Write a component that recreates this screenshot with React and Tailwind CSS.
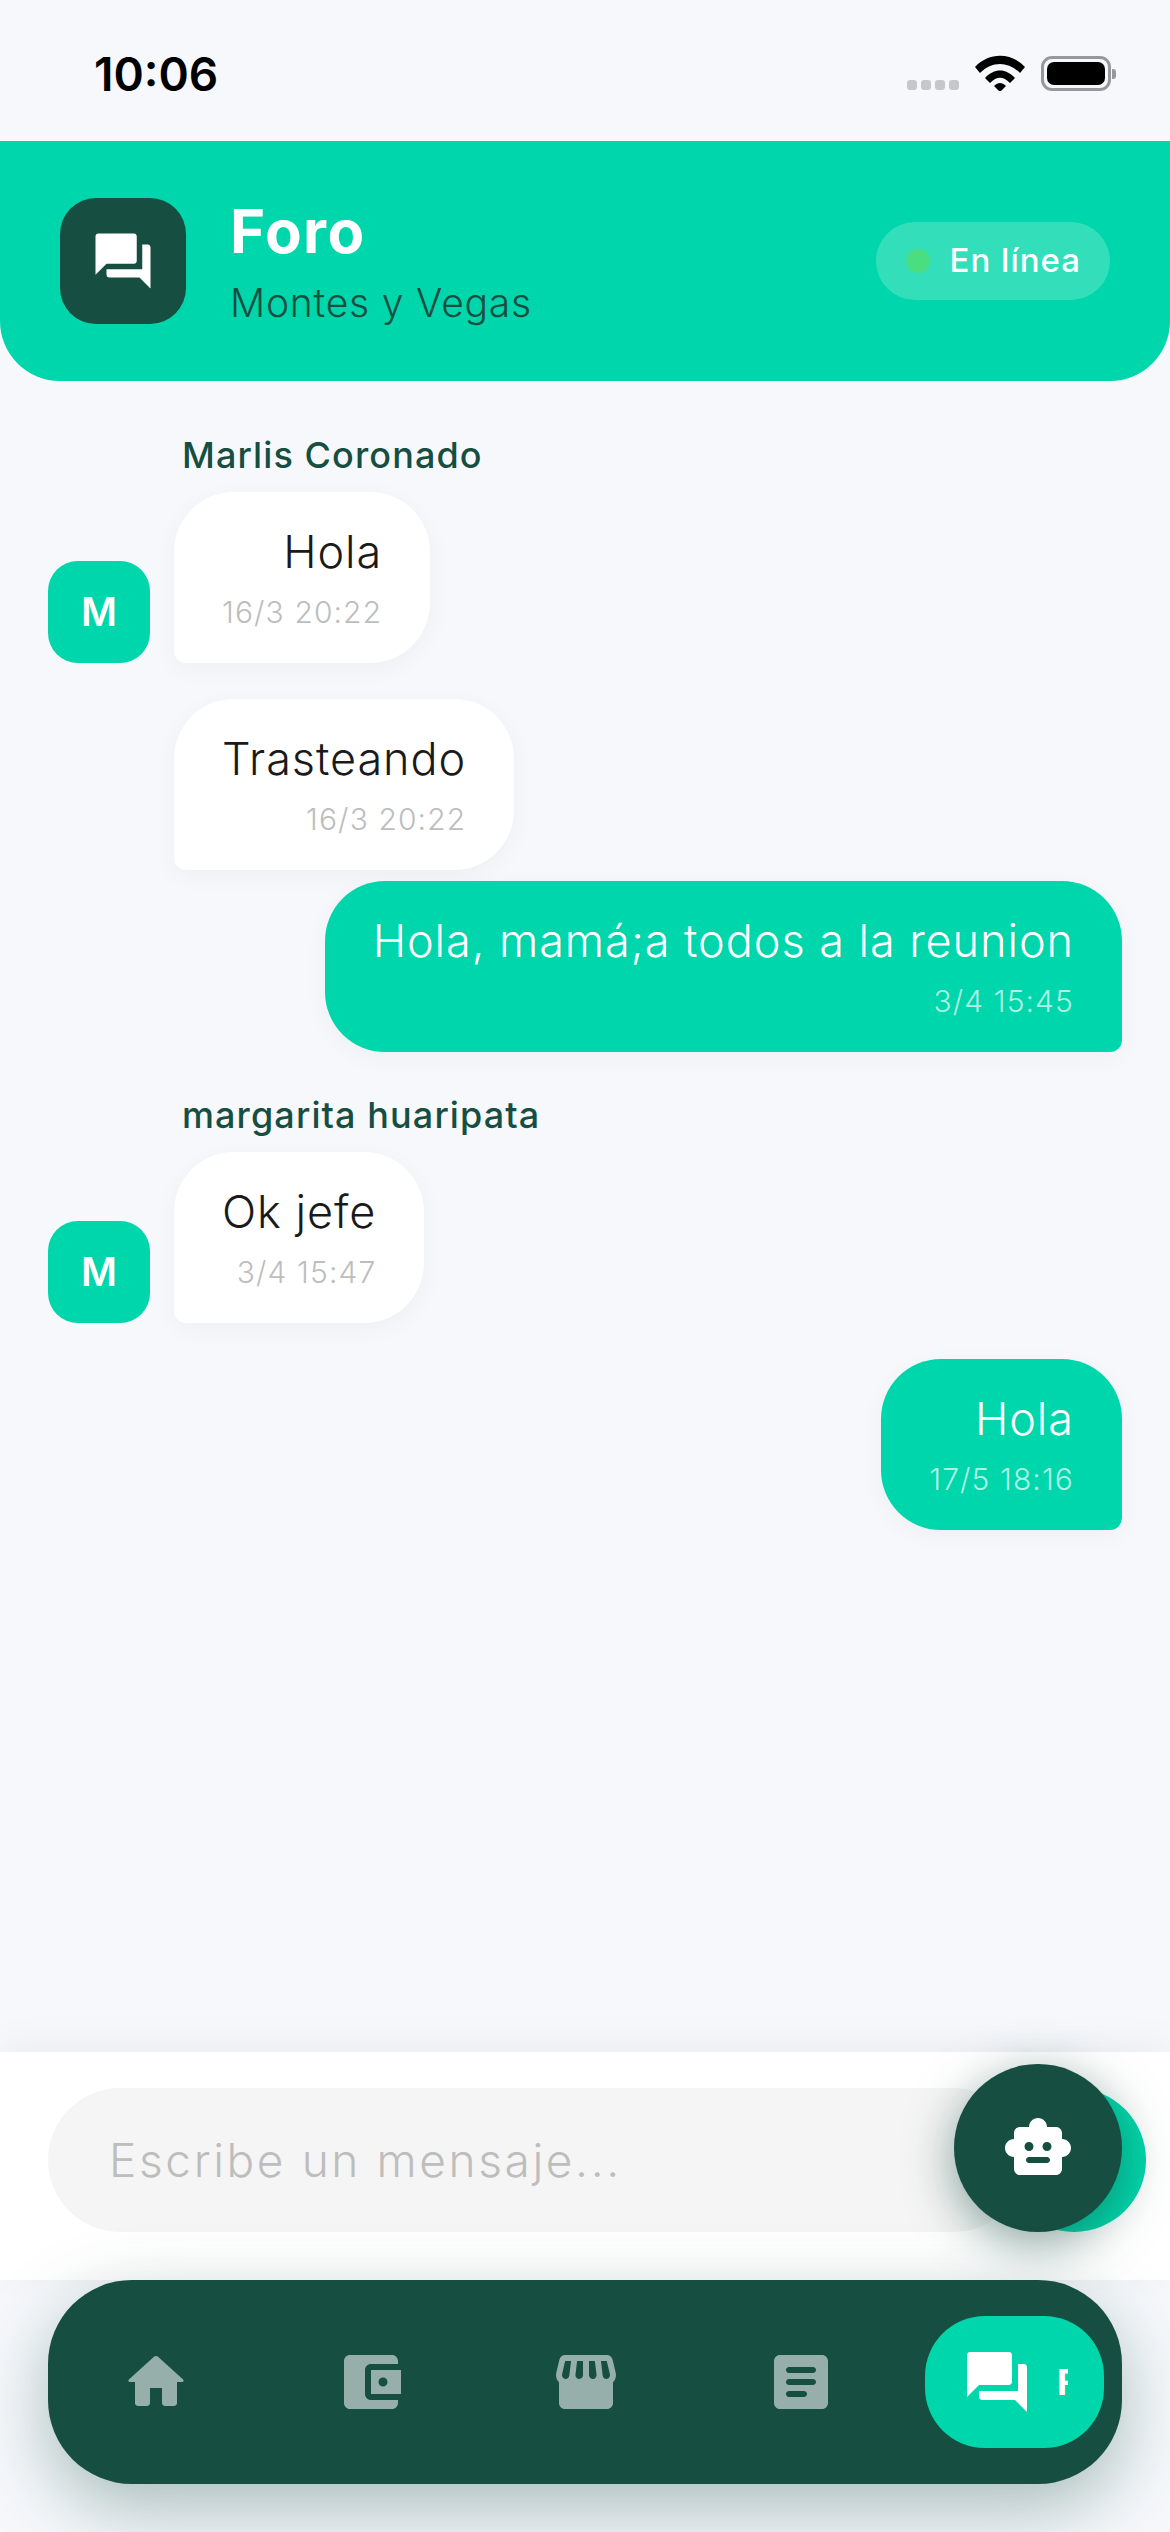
const font = { fontFamily: "Inter, 'Noto Sans', sans-serif" };

const paths = {
  home: "M10 19v-5h4v5c0 .55.45 1 1 1h3c.55 0 1-.45 1-1v-7h1.7c.46 0 .68-.57.33-.87L12.67 3.6c-.38-.34-.96-.34-1.34 0l-8.36 7.53c-.34.3-.13.87.33.87H5v7c0 .55.45 1 1 1h3c.55 0 1-.45 1-1z",
  wallet: "M21 18v1c0 1.1-.9 2-2 2H5c-1.11 0-2-.9-2-2V5c0-1.1.89-2 2-2h14c1.1 0 2 .9 2 2v1h-9c-1.11 0-2 .9-2 2v8c0 1.1.89 2 2 2h9zm-9-2h10V8H12v8zm4-2.5c-.83 0-1.5-.67-1.5-1.5s.67-1.5 1.5-1.5 1.5.67 1.5 1.5-.67 1.5-1.5 1.5z",
  store: "M21.9 8.89l-1.05-4.37c-.22-.9-1-1.52-1.91-1.52H5.05c-.9 0-1.69.63-1.9 1.52L2.1 8.89c-.24 1.02-.02 2.06.62 2.88.08.11.19.19.28.29V19c0 1.1.9 2 2 2h14c1.1 0 2-.9 2-2v-6.94c.09-.09.2-.18.28-.28.64-.82.87-1.87.62-2.89zm-2.99-3.9l1.05 4.37c.1.42.01.84-.25 1.17-.14.18-.44.47-.94.47-.61 0-1.14-.49-1.21-1.14L16.98 5l1.93-.01zM13 5h1.96l.54 4.52c.05.39-.07.78-.33 1.07-.22.26-.54.41-.95.41-.67 0-1.22-.59-1.22-1.31V5zM8.49 9.52L9.04 5H11v4.69c0 .72-.55 1.31-1.29 1.31-.34 0-.65-.15-.89-.41-.25-.29-.37-.68-.33-1.07zm-4.45-.16L5.05 5h1.97l-.58 4.86c-.08.65-.6 1.14-1.21 1.14-.49 0-.8-.29-.93-.47-.27-.32-.36-.75-.26-1.17z",
  article: "M19 3H5c-1.1 0-2 .9-2 2v14c0 1.1.9 2 2 2h14c1.1 0 2-.9 2-2V5c0-1.1-.9-2-2-2zm-6 14H8c-.55 0-1-.45-1-1s.45-1 1-1h5c.55 0 1 .45 1 1s-.45 1-1 1zm3-4H8c-.55 0-1-.45-1-1s.45-1 1-1h8c.55 0 1 .45 1 1s-.45 1-1 1zm0-4H8c-.55 0-1-.45-1-1s.45-1 1-1h8c.55 0 1 .45 1 1s-.45 1-1 1z",
  forum: "M21 6h-2v9H6v2c0 .55.45 1 1 1h11l4 4V7c0-.55-.45-1-1-1zm-4 6V3c0-.55-.45-1-1-1H3c-.55 0-1 .45-1 1v14l4-4h10c.55 0 1-.45 1-1z",
  robot: "M20 9V7c0-1.1-.9-2-2-2h-3c0-1.66-1.34-3-3-3S9 3.34 9 5H6c-1.1 0-2 .9-2 2v2c-1.66 0-3 1.34-3 3s1.34 3 3 3v4c0 1.1.9 2 2 2h12c1.1 0 2-.9 2-2v-4c1.66 0 3-1.34 3-3s-1.34-3-3-3zM7.5 11.5c0-.83.67-1.5 1.5-1.5s1.5.67 1.5 1.5S9.83 13 9 13s-1.5-.67-1.5-1.5zM15 17H9c-.55 0-1-.45-1-1s.45-1 1-1h6c.55 0 1 .45 1 1s-.45 1-1 1zm0-4c-.83 0-1.5-.67-1.5-1.5S14.17 10 15 10s1.5.67 1.5 1.5S15.83 13 15 13z",
};

function Icon({ name, className }) {
  return (
    <svg viewBox="0 0 24 24" fill="currentColor" className={className}>
      <path fillRule="evenodd" d={paths[name]} />
    </svg>
  );
}

function StatusBar() {
  return (
    <div className="h-[141px] shrink-0 relative">
      <span className="absolute left-[94px] top-[48px] text-[46px] leading-[52px] font-semibold text-black" style={font}>10:06</span>
      <div className="absolute left-[907px] top-[80px] flex gap-[4px]">
        {[0, 1, 2, 3].map((i) => (
          <div key={i} className="w-[10px] h-[10px] rounded-[3px] bg-[#c7c7c9]" />
        ))}
      </div>
      <svg viewBox="0 0 50 36" className="absolute left-[975px] top-[55px] w-[50px] h-[36px]">
        <path d="M0 12 C14 -3 36 -3 50 12 L45 18 C33 6 17 6 5 18 Z" fill="#000" />
        <path d="M10 23 C19 13 31 13 40 23 L35 28 C28 21 22 21 15 28 Z" fill="#000" />
        <path d="M19 31 C23 27 27 27 31 31 L25 37 Z" fill="#000" />
      </svg>
      <div className="absolute left-[1041px] top-[56px] w-[70px] h-[35px] rounded-[11px] border-[3px] border-[#98989a] p-[3px]">
        <div className="w-full h-full rounded-[7px] bg-black" />
      </div>
      <div className="absolute left-[1112px] top-[69px] w-[4px] h-[10px] rounded-r-[3px] bg-[#98989a]" />
    </div>
  );
}

function Header() {
  return (
    <div className="h-[240px] shrink-0 bg-[#00D6AB] rounded-b-[60px] pl-[60px] pr-[60px] flex items-center justify-between">
      <div className="flex items-center gap-[44px]">
        <div className="w-[126px] h-[126px] rounded-[36px] bg-[#164E41] flex items-center justify-center">
          <Icon name="forum" className="w-[66px] h-[66px] text-white" />
        </div>
        <div className="flex flex-col gap-[12px] mt-[-1px]">
          <span className="text-[60px] leading-[72px] font-bold text-white tracking-[1.4px]">Foro</span>
          <span className="text-[39px] leading-[48px] font-light text-[#164E41] tracking-[0.8px]">Montes y Vegas</span>
        </div>
      </div>
      <div className="h-[78px] pl-[30px] pr-[29px] rounded-[39px] bg-white/20 flex items-center gap-[20px]">
        <div className="w-[24px] h-[24px] rounded-full bg-[#4ADE80]" />
        <span className="text-[33px] font-medium text-white tracking-[1px]">En línea</span>
      </div>
    </div>
  );
}

function Bubble({ text, time, mine }) {
  return (
    <div
      className={
        mine
          ? "h-[171px] px-[48px] flex flex-col items-end pt-[30px] rounded-[60px] rounded-br-[12px] bg-[#00D6AB] shadow-[0_6px_24px_rgba(0,0,0,0.04)]"
          : "h-[171px] px-[48px] flex flex-col items-end pt-[30px] rounded-[60px] rounded-bl-[12px] bg-white shadow-[0_6px_24px_rgba(0,0,0,0.04)]"
      }
    >
      <span className={mine ? "text-[45px] leading-[60px] font-light text-white tracking-[0.95px]" : "text-[45px] leading-[60px] font-light text-[#1a1a1a] tracking-[0.95px]"}>{text}</span>
      <span className={mine ? "text-[30px] leading-[36px] mt-[12px] font-light text-white/70 tracking-[1.1px]" : "text-[30px] leading-[36px] mt-[12px] font-light text-[#bdbdbd] tracking-[1.1px]"}>{time}</span>
    </div>
  );
}

function Avatar() {
  return (
    <div className="w-[102px] h-[102px] rounded-[30px] bg-[#00D6AB] flex items-center justify-center text-white text-[39px] font-semibold shrink-0">
      M
    </div>
  );
}

function Received({ name, text, time, avatar }) {
  return (
    <div className="flex items-end gap-[24px]">
      {avatar ? <Avatar /> : <div className="w-[102px] shrink-0" />}
      <div className="flex flex-col items-start">
        {name && <span className="pl-[8px] mb-[15px] text-[36px] leading-[44px] font-medium text-[#164E41] tracking-[1.1px]">{name}</span>}
        <Bubble text={text} time={time} />
      </div>
    </div>
  );
}

function Messages() {
  return (
    <div className="flex-1 px-[48px] pt-[52px] flex flex-col">
      <Received name="Marlis Coronado" text="Hola" time="16/3 20:22" avatar />
      <div className="mt-[36px]">
        <Received text="Trasteando" time="16/3 20:22" />
      </div>
      <div className="mt-[11px] flex justify-end">
        <Bubble mine text="Hola, mamá;a todos a la reunion" time="3/4 15:45" />
      </div>
      <div className="mt-[41px]">
        <Received name="margarita huaripata" text="Ok jefe" time="3/4 15:47" avatar />
      </div>
      <div className="mt-[36px] flex justify-end">
        <Bubble mine text="Hola" time="17/5 18:16" />
      </div>
    </div>
  );
}

function InputBar() {
  return (
    <div className="relative h-[228px] shrink-0 bg-white pl-[48px] pr-[24px] pt-[36px] flex items-start shadow-[0_-8px_36px_rgba(0,0,0,0.05)]">
      <div className="flex-1 h-[144px] rounded-[72px] bg-[#F5F5F5] pl-[61px] flex items-center mr-[-24px] min-w-0">
        <span className="text-[46px] font-light text-[#bdbdbd] tracking-[2.6px]">Escribe un mensaje...</span>
      </div>
      <div className="w-[144px] h-[144px] rounded-full bg-[#00D6AB] shrink-0" />
      {/* boton flotante del bot */}
      <div className="absolute left-[954px] top-[12px] w-[168px] h-[168px] rounded-full bg-[#164E41] flex items-center justify-center shadow-[0_12px_48px_rgba(22,78,65,0.5)]">
        <Icon name="robot" className="w-[72px] h-[72px] text-white" />
      </div>
    </div>
  );
}

function NavBar() {
  const items = ["home", "wallet", "store", "article"];
  return (
    <div className="relative shrink-0 mx-[48px] mb-[48px] h-[204px] rounded-[84px] bg-[#164E41] flex items-center shadow-[0_24px_72px_rgba(22,78,65,0.35)]">
      {items.map((name) => (
        <div key={name} className="w-[215px] flex justify-center">
          <Icon name={name} className="w-[72px] h-[72px] text-white/55" />
        </div>
      ))}
      <div className="ml-[17px] w-[179px] h-[132px] rounded-[60px] bg-[#00D6AB] px-[36px] flex items-center">
        <div className="w-full overflow-hidden flex items-center gap-[24px]">
          <Icon name="forum" className="w-[72px] h-[72px] text-white shrink-0" />
          <span className="text-[36px] font-bold text-white shrink-0">Foro</span>
        </div>
      </div>
    </div>
  );
}

export default function App() {
  return (
    <div className="h-screen bg-[#F6F8FC] flex flex-col overflow-hidden" style={font}>
      <StatusBar />
      <Header />
      <Messages />
      <InputBar />
      <NavBar />
    </div>
  );
}
